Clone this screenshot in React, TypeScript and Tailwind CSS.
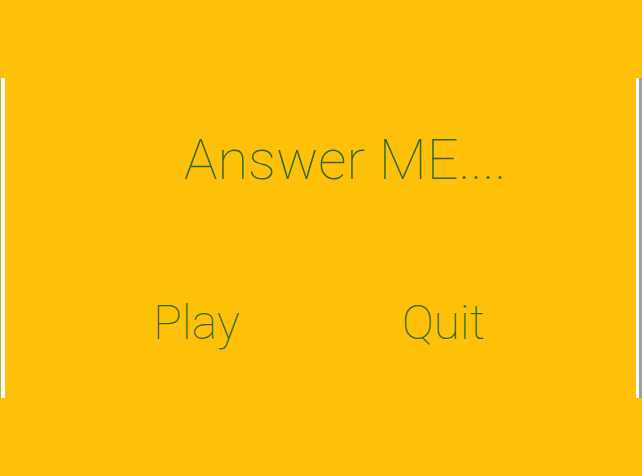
export default function App() {
  return (
    <div className="flex h-[476px] w-[642px] items-center bg-[#ffc107] font-['Roboto',sans-serif] text-[#33691e]">
      <div className="flex h-[320px] w-[6px] shrink-0">
        <div className="w-px bg-[#c9b43a]" />
        <div className="w-[4px] bg-white" />
      </div>
      <div className="flex h-full flex-1 flex-col">
        <div className="mt-[132px] pl-[178px] text-[56px] font-thin leading-none">Answer ME....</div>
        <div className="mt-[111px] flex pl-[147px] text-[48px] font-thin leading-none">
          <span>Play</span>
          <span className="ml-[162px]">Quit</span>
        </div>
      </div>
      <div className="flex h-[320px] w-[6px] shrink-0">
        <div className="w-[3px] bg-white" />
        <div className="w-[3px] bg-[#9aa29a]" />
      </div>
    </div>
  );
}
